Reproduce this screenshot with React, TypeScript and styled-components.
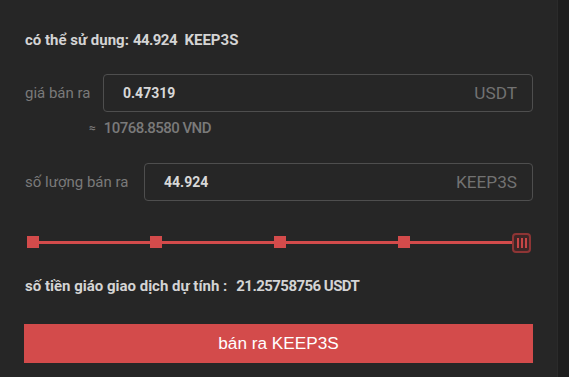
import React from "react";
import styled, { createGlobalStyle } from "styled-components";

const Global = createGlobalStyle`
  html, body { margin: 0; padding: 0; background: #262626; }
  body { font-family: Roboto, "Noto Sans", sans-serif; }
  * { box-sizing: border-box; }
`;

const Page = styled.div`
  display: flex;
  width: 569px;
  height: 377px;
  background: #262626;
  overflow: hidden;
`;

const Panel = styled.div`
  flex: 0 0 557px;
  display: flex;
  flex-direction: column;
  padding: 31px 24px 0 24px;
`;

const SideStrip = styled.div`
  flex: 1;
  background: #1e1e1e;
  border-left: 1px solid #2b2b2b;
`;

const InfoLine = styled.div<{ $mt?: number }>`
  display: flex;
  align-items: center;
  height: 18px;
  margin-top: ${(p) => p.$mt ?? 0}px;
  padding-left: 1px;
  font-size: 15px;
  font-weight: 700;
  color: #d4d4d4;
  white-space: pre;
`;

const Prefix = styled.span<{ $ls?: number }>`
  letter-spacing: ${(p) => p.$ls ?? 0}px;
`;

const Num = styled.span<{ $ml?: number }>`
  margin-left: ${(p) => p.$ml ?? 0}px;
  letter-spacing: -0.55px;
`;

const FieldRow = styled.div<{ $mt: number }>`
  display: flex;
  align-items: center;
  margin-top: ${(p) => p.$mt}px;
`;

const Label = styled.div<{ $w: number }>`
  flex: 0 0 ${(p) => p.$w}px;
  padding-left: 1px;
  font-size: 15px;
  color: #7a7a7a;
`;

const InputBox = styled.div`
  flex: 1;
  height: 38px;
  display: flex;
  align-items: center;
  justify-content: space-between;
  border: 1px solid #4e4e4e;
  border-radius: 4px;
  padding: 0 15px 0 19px;
`;

const Value = styled.span`
  font-size: 14px;
  font-weight: 700;
  color: #d8d8d8;
`;

const Unit = styled.span`
  font-size: 17.2px;
  color: #727272;
`;

const Approx = styled.div`
  display: flex;
  align-items: center;
  gap: 8px;
  height: 18px;
  margin-top: 7px;
  padding-left: 65px;
  font-size: 15px;
  font-weight: 500;
  color: #7a7a7a;
`;

const ApproxSign = styled.span`
  font-size: 12px;
`;

const Slider = styled.div`
  position: relative;
  height: 20px;
  margin-top: 32px;
  margin-left: 3px;
  width: 504px;
`;

const Track = styled.div`
  position: absolute;
  left: 6px;
  right: 10px;
  top: 8px;
  height: 3px;
  background: #d34b4b;
`;

const Dot = styled.div`
  position: absolute;
  top: 3px;
  width: 12px;
  height: 12px;
  background: #d34b4b;
`;

const Handle = styled.div`
  position: absolute;
  top: 0;
  right: 0;
  width: 19px;
  height: 20px;
  border: 2px solid #8e3535;
  border-radius: 4px;
  background: #3e2626;
  display: flex;
  align-items: center;
  justify-content: center;
  gap: 2px;
`;

const Bar = styled.span`
  width: 2px;
  height: 10px;
  background: #c84646;
`;

const SubmitButton = styled.button`
  margin-top: 29px;
  height: 39px;
  width: 509px;
  border: none;
  background: #d34b4b;
  color: #ffffff;
  font-family: "Liberation Sans", Arial, sans-serif;
  font-size: 17.2px;
  display: flex;
  align-items: center;
  justify-content: center;
  padding: 0;
`;

const marks = [0, 123, 247, 371];

export default function App() {
  return (
    <>
      <Global />
      <Page>
        <Panel>
          <InfoLine>
            có thể sử dụng:<Num $ml={4}>44.924</Num>  KEEP3S
          </InfoLine>
          <FieldRow $mt={25}>
            <Label $w={79}>giá bán ra</Label>
            <InputBox>
              <Value>0.47319</Value>
              <Unit>USDT</Unit>
            </InputBox>
          </FieldRow>
          <Approx>
            <ApproxSign>≈</ApproxSign>
            <Num>10768.8580 VND</Num>
          </Approx>
          <FieldRow $mt={26}>
            <Label $w={120}>số lượng bán ra</Label>
            <InputBox>
              <Value>44.924</Value>
              <Unit>KEEP3S</Unit>
            </InputBox>
          </FieldRow>
          <Slider>
            <Track />
            {marks.map((m) => (
              <Dot key={m} style={{ left: m }} />
            ))}
            <Handle>
              <Bar />
              <Bar />
              <Bar />
            </Handle>
          </Slider>
          <InfoLine $mt={24}>
            <Prefix>số tiền giáo giao dịch dự tính :</Prefix>
            <Num $ml={9}>21.25758756 USDT</Num>
          </InfoLine>
          <SubmitButton>bán ra KEEP3S</SubmitButton>
        </Panel>
        <SideStrip />
      </Page>
    </>
  );
}
